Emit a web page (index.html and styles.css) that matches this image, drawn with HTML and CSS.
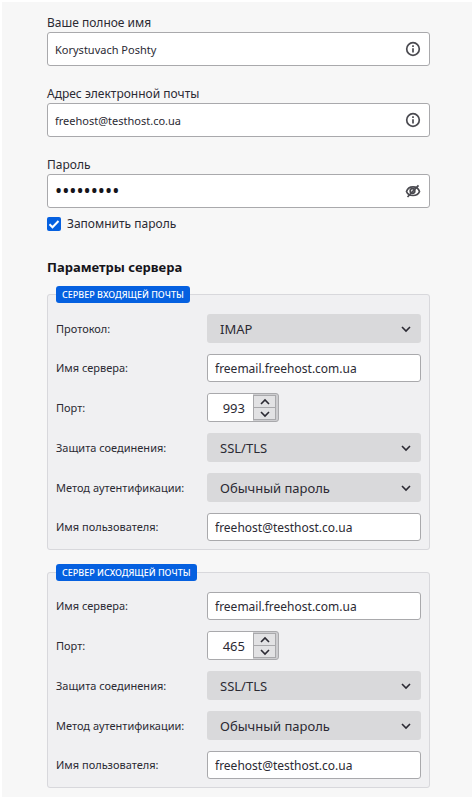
FILE: index.html
```html
<!DOCTYPE html>
<html lang="ru">
  <head>
    <meta charset="utf-8">
    <title>Параметры учётной записи</title>
    <link rel="stylesheet" href="styles.css">
  </head>
  <body>
    <form class="setup">
      <div class="field">
        <label for="realname">Ваше полное имя</label>
        <div class="box">
          <input id="realname" type="text" value="Korystuvach Poshty">
          <svg class="icon" viewBox="0 0 16 16"><circle cx="8" cy="8" r="6.3"/><path d="M8 7.2v4.3M8 4.3v1.7"/></svg>
        </div>
      </div>
      <div class="field">
        <label for="email">Адрес электронной почты</label>
        <div class="box">
          <input id="email" type="text" value="freehost@testhost.co.ua">
          <svg class="icon" viewBox="0 0 16 16"><circle cx="8" cy="8" r="6.3"/><path d="M8 7.2v4.3M8 4.3v1.7"/></svg>
        </div>
      </div>
      <div class="field">
        <label for="password">Пароль</label>
        <div class="box">
          <input id="password" type="password" value="123456789">
          <svg class="icon" viewBox="0 0 16 16"><path d="M1.500 8.500C2.500 5.300 5 3.800 8 3.800s5.500 1.500 6.500 4.700C13.500 11.200 11 12.500 8 12.500S2.500 11.200 1.500 8.500z"/><circle cx="7.500" cy="8" r="2.300"/><path d="M2.500 14L13.500 2.300"/></svg>
        </div>
      </div>
      <div class="remember">
        <span class="check">
          <input id="remember" type="checkbox" checked>
          <svg viewBox="0 0 14 14"><path d="M2.500 7.300l3 3L11.500 4"/></svg>
        </span>
        <label for="remember">Запомнить пароль</label>
      </div>

      <h2>Параметры сервера</h2>

      <fieldset>
        <legend>СЕРВЕР ВХОДЯЩЕЙ ПОЧТЫ</legend>
        <div class="rows">
          <label for="in-protocol">Протокол:</label>
          <div class="select">
            <select id="in-protocol"><option>IMAP</option><option>POP3</option></select>
            <svg viewBox="0 0 10 10"><path d="M1 3l4 4 4-4"/></svg>
          </div>
          <label for="in-host">Имя сервера:</label>
          <input id="in-host" class="text" type="text" value="freemail.freehost.com.ua">
          <label for="in-port">Порт:</label>
          <div class="number">
            <input id="in-port" type="number" value="993">
            <div class="spin">
              <button type="button" aria-label="Больше"><svg viewBox="0 0 10 10"><path d="M1 7l4-4 4 4"/></svg></button>
              <button type="button" aria-label="Меньше"><svg viewBox="0 0 10 10"><path d="M1 3l4 4 4-4"/></svg></button>
            </div>
          </div>
          <label for="in-security">Защита соединения:</label>
          <div class="select">
            <select id="in-security"><option>SSL/TLS</option><option>STARTTLS</option></select>
            <svg viewBox="0 0 10 10"><path d="M1 3l4 4 4-4"/></svg>
          </div>
          <label for="in-auth">Метод аутентификации:</label>
          <div class="select">
            <select id="in-auth"><option>Обычный пароль</option></select>
            <svg viewBox="0 0 10 10"><path d="M1 3l4 4 4-4"/></svg>
          </div>
          <label for="in-user">Имя пользователя:</label>
          <input id="in-user" class="text" type="text" value="freehost@testhost.co.ua">
        </div>
      </fieldset>

      <fieldset>
        <legend>СЕРВЕР ИСХОДЯЩЕЙ ПОЧТЫ</legend>
        <div class="rows">
          <label for="out-host">Имя сервера:</label>
          <input id="out-host" class="text" type="text" value="freemail.freehost.com.ua">
          <label for="out-port">Порт:</label>
          <div class="number">
            <input id="out-port" type="number" value="465">
            <div class="spin">
              <button type="button" aria-label="Больше"><svg viewBox="0 0 10 10"><path d="M1 7l4-4 4 4"/></svg></button>
              <button type="button" aria-label="Меньше"><svg viewBox="0 0 10 10"><path d="M1 3l4 4 4-4"/></svg></button>
            </div>
          </div>
          <label for="out-security">Защита соединения:</label>
          <div class="select">
            <select id="out-security"><option>SSL/TLS</option><option>STARTTLS</option></select>
            <svg viewBox="0 0 10 10"><path d="M1 3l4 4 4-4"/></svg>
          </div>
          <label for="out-auth">Метод аутентификации:</label>
          <div class="select">
            <select id="out-auth"><option>Обычный пароль</option></select>
            <svg viewBox="0 0 10 10"><path d="M1 3l4 4 4-4"/></svg>
          </div>
          <label for="out-user">Имя пользователя:</label>
          <input id="out-user" class="text" type="text" value="freehost@testhost.co.ua">
        </div>
      </fieldset>
    </form>
  </body>
</html>
```
FILE: styles.css
```css
* { box-sizing: border-box; }
body {
  margin: 2px;
  background: #fff;
  color: #2b2a33;
  font-family: "Noto Sans", sans-serif;
  font-size: 12px;
  line-height: 18px;
}
input, select, button {
  margin: 0;
  font-family: inherit;
  color: inherit;
}
svg {
  display: block;
  fill: none;
  stroke: #2b2a33;
}
.setup {
  padding: 12px 42px 9px 45px;
  background: #f7f7f7;
}

/* account fields */
.field { margin-bottom: 19px; }
.field label { display: block; }
.box {
  display: flex;
  align-items: center;
  height: 34px;
  padding: 0 8px 0 7px;
  border: 1px solid #a9a9ac;
  border-radius: 3px;
  background: #fff;
}
.box input {
  flex: 1;
  min-width: 0;
  padding: 0;
  border: 0;
  background: none;
  font-size: 11px;
  outline: none;
}
.box input[type=password] {
  color: #15141a;
  font-size: 19px;
}
.icon {
  width: 16px;
  height: 16px;
  stroke: #4a4a50;
  stroke-width: 1.7;
}

.remember {
  display: flex;
  align-items: center;
  gap: 6px;
  margin-top: -12px;
}
.check { display: grid; }
.check input, .check svg {
  grid-area: 1 / 1;
  width: 14px;
  height: 14px;
}
.check input {
  appearance: none;
  border-radius: 2px;
  background: #0560e0;
}
.check svg {
  stroke: #fff;
  stroke-width: 2;
  pointer-events: none;
}

h2 {
  margin: 24px 0 9px;
  font-size: 13px;
  line-height: 20px;
  color: #15141a;
}

/* server settings */
fieldset {
  margin: 0 0 14px;
  padding: 11px 8px 8px;
  border: 1px solid #d8d8dc;
  border-radius: 3px;
  background: #f0f0f2;
}
fieldset:last-child { margin-bottom: 0; }
legend {
  padding: 0 6px;
  border-radius: 3px;
  background: #0560e0;
  color: #fff;
  font-size: 9px;
  font-weight: 500;
  line-height: 17px;
}
.rows {
  display: grid;
  grid-template-columns: 151px 1fr;
  row-gap: 11px;
  align-items: center;
  font-size: 11px;
}
.text {
  width: 100%;
  height: 28px;
  padding: 0 7px;
  border: 1px solid #a9a9ac;
  border-radius: 3px;
  background: #fff;
  font-size: 12px;
}
.select {
  display: grid;
  align-items: center;
}
.select select {
  grid-area: 1 / 1;
  appearance: none;
  width: 100%;
  height: 29px;
  padding: 0 30px 0 13px;
  border: 0;
  border-radius: 3px;
  background: #d9d9db;
  font-size: 13px;
}
.select svg {
  grid-area: 1 / 1;
  justify-self: end;
  width: 10px;
  height: 10px;
  margin-right: 10px;
  stroke-width: 1.6;
  pointer-events: none;
}
.number {
  display: flex;
  justify-self: start;
  height: 29px;
  border: 1px solid #a9a9ac;
  border-radius: 3px;
  background: #cdcdd0;
}
.number input {
  appearance: textfield;
  width: 45px;
  padding: 0 8px 0 0;
  border: 0;
  border-radius: 2px 0 0 2px;
  background: #fff;
  font-size: 13px;
  text-align: right;
}
.number input::-webkit-inner-spin-button { display: none; }
.spin {
  display: grid;
  width: 25px;
  padding: 1px 2px 1px 0;
}
.spin button {
  display: grid;
  place-items: center;
  padding: 0;
  border: 1px solid #a9a9ac;
  background: #e2e2e4;
}
.spin button + button { border-top: 0; }
.spin svg {
  width: 10px;
  height: 10px;
  stroke-width: 1.6;
}
```
